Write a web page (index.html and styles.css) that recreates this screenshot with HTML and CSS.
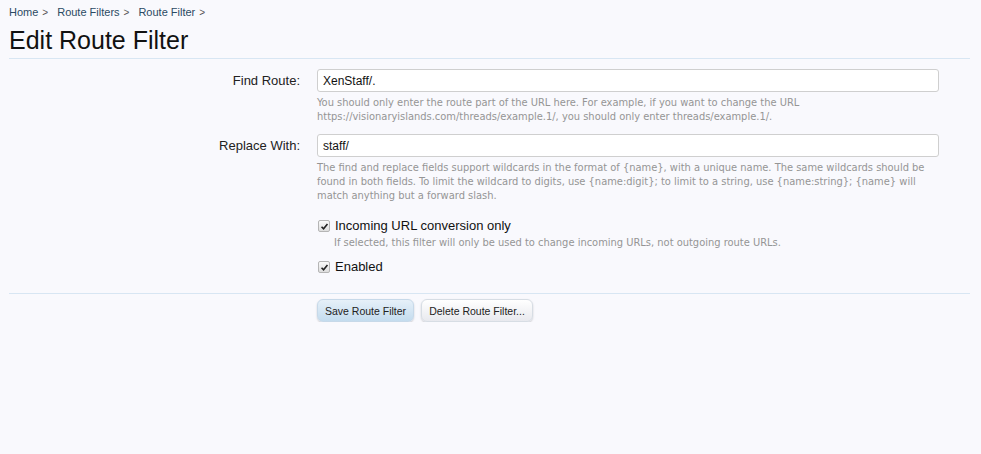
FILE: index.html
```html
<!DOCTYPE html>
<html>
<head>
<meta charset="utf-8">
<title>Edit Route Filter</title>
<link rel="stylesheet" href="styles.css">
</head>
<body>
<div class="page">
  <nav class="crumbs">
    <span class="crumb"><a href="#">Home</a><span class="arrow">&gt;</span></span>
    <span class="crumb"><a href="#">Route Filters</a><span class="arrow">&gt;</span></span>
    <span class="crumb"><a href="#">Route Filter</a><span class="arrow">&gt;</span></span>
  </nav>
  <h1 class="title">Edit Route Filter</h1>
  <form class="form">
    <div class="unit">
      <label class="label">Find Route:</label>
      <div class="ctrl">
        <input class="text" type="text" value="XenStaff/.">
        <p class="hint">You should only enter the route part of the URL here. For example, if you want to change the URL https://visionaryislands.com/threads/example.1/, you should only enter threads/example.1/.</p>
      </div>
    </div>
    <div class="unit unit-2">
      <label class="label">Replace With:</label>
      <div class="ctrl">
        <input class="text" type="text" value="staff/">
        <p class="hint">The find and replace fields support wildcards in the format of {name}, with a unique name. The same wildcards should be found in both fields. To limit the wildcard to digits, use {name:digit}; to limit to a string, use {name:string}; {name} will match anything but a forward slash.</p>
      </div>
    </div>
    <div class="unit unit-checks">
      <div class="label"></div>
      <div class="ctrl">
        <label class="check"><span class="box"><svg viewBox="0 0 13 13" width="13" height="13"><path d="M3 6.8 L5.4 9.2 L10 3.6" fill="none" stroke="#222" stroke-width="1.9"/></svg></span>Incoming URL conversion only</label>
        <p class="hint hint-check">If selected, this filter will only be used to change incoming URLs, not outgoing route URLs.</p>
        <label class="check check-2"><span class="box"><svg viewBox="0 0 13 13" width="13" height="13"><path d="M3 6.8 L5.4 9.2 L10 3.6" fill="none" stroke="#222" stroke-width="1.9"/></svg></span>Enabled</label>
      </div>
    </div>
    <div class="unit submit">
      <div class="label"></div>
      <div class="ctrl buttons">
        <button type="button" class="btn primary">Save Route Filter</button>
        <button type="button" class="btn">Delete Route Filter...</button>
      </div>
    </div>
  </form>
</div>
</body>
</html>
```

FILE: styles.css
```css
html, body {
  margin: 0;
  padding: 0;
  background: #f9f9fd;
}
body {
  font-family: "Liberation Sans", Arial, sans-serif;
  color: #111;
}
.page {
  padding: 0 11px 0 9px;
}
.crumbs {
  display: flex;
  font-size: 11px;
  line-height: 14px;
  padding-top: 5px;
  height: 14px;
}
.crumb {
  margin-right: 9px;
}
.crumb a {
  color: #2b4a63;
  text-decoration: none;
}
.crumb .arrow {
  color: #555;
  margin-left: 4px;
  font-size: 10px;
}
.title {
  font-weight: normal;
  font-size: 25px;
  line-height: 30px;
  margin: 6px 0 0 0;
  color: #111;
  padding-bottom: 3px;
  border-bottom: 1px solid #d8e6f3;
}
.form {
  margin: 0;
  padding-top: 10px;
}
.unit {
  display: grid;
  grid-template-columns: 291px 622px;
  column-gap: 17px;
}
.label {
  text-align: right;
  font-size: 13px;
  line-height: 23px;
  color: #222;
}
.text {
  box-sizing: border-box;
  width: 622px;
  height: 23px;
  margin: 0;
  border: 1px solid #cfcfcf;
  border-radius: 3px;
  background: #fff;
  padding: 0 5px;
  font-family: "Liberation Sans", Arial, sans-serif;
  font-size: 12px;
  color: #111;
  display: block;
}
.hint {
  margin: 4px 0 0 0;
  font-family: "DejaVu Sans Condensed", "DejaVu Sans", sans-serif;
  font-size: 11px;
  line-height: 14px;
  color: #959595;
}
.unit-2 {
  margin-top: 10px;
}
.unit-checks {
  margin-top: 14px;
}
.check {
  display: flex;
  align-items: center;
  font-size: 13px;
  line-height: 18px;
  color: #111;
}
.box {
  box-sizing: border-box;
  width: 12px;
  height: 12px;
  margin: 0 5px 0 1px;
  border: 1px solid #b5b5b5;
  border-radius: 2px;
  background: linear-gradient(#fafafa, #dedede);
  display: flex;
  align-items: center;
  justify-content: center;
  overflow: hidden;
}
.box svg {
  width: 11px;
  height: 11px;
  flex: none;
}
.hint-check {
  margin: 1px 0 0 17px;
}
.check-2 {
  margin-top: 8px;
}
.submit {
  margin-top: 17px;
  border-top: 1px solid #d8e6f3;
  padding-top: 5px;
}
.buttons {
  display: flex;
  gap: 7px;
}
.btn {
  font-family: "Liberation Sans", Arial, sans-serif;
  font-size: 10.5px;
  height: 23px;
  padding: 0 7px;
  border: 1px solid #d7dde4;
  border-radius: 6px;
  background: linear-gradient(#ffffff, #e8e9ee);
  color: #222;
  box-shadow: 0 1px 2px rgba(0,0,0,0.18);
  cursor: pointer;
}
.btn.primary {
  background: linear-gradient(#e6f0f9, #c4dcee);
  border-color: #c7d9e9;
}
```
